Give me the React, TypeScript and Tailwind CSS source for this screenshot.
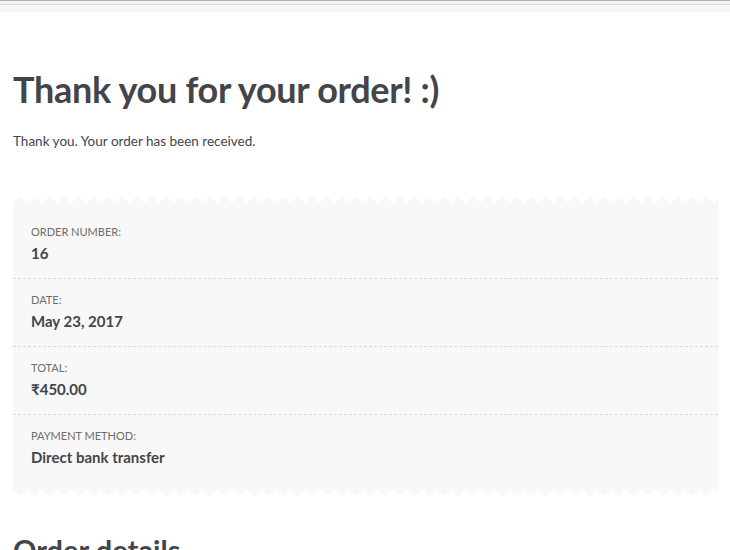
import React from "react";

const rows = [
  { label: "Order number:", value: "16" },
  { label: "Date:", value: "May 23, 2017" },
  { label: "Total:", value: "₹450.00" },
  { label: "Payment method:", value: "Direct bank transfer" },
];

function Zigzag({ flip }: { flip?: boolean }) {
  // saw-tooth edge of the receipt card
  return (
    <svg className="block h-[7px] w-full" preserveAspectRatio="none">
      <defs>
        <pattern id={flip ? "zz-bottom" : "zz-top"} width="14.6" height="7" patternUnits="userSpaceOnUse">
          <path d={flip ? "M0 0 L14.6 0 L7.3 7 Z" : "M0 7 L7.3 0 L14.6 7 Z"} fill="#f8f8f8" />
        </pattern>
      </defs>
      <rect width="100%" height="7" fill={`url(#${flip ? "zz-bottom" : "zz-top"})`} />
    </svg>
  );
}

export default function App() {
  return (
    <div className="h-[550px] w-[730px] overflow-hidden bg-white font-['Lato',sans-serif] text-[#43454b]">
      {/* browser top edge */}
      <div className="h-px bg-[#b3b3b3]" />
      <div className="h-[3px] bg-[#f3f3f3]" />
      <div className="h-px bg-[#d9d9d9]" />
      <div className="h-[7px] bg-[#f6f6f6]" />

      <main className="px-[13px]">
        <h1 className="mt-[54px] text-[36px] leading-[46px] font-bold tracking-[-0.3px]">
          Thank you for your order! :)
        </h1>
        <p className="mt-[19px] text-[13.5px] leading-[20px]">Thank you. Your order has been received.</p>

        <section className="mt-[45px] w-[705px]">
          <Zigzag />
          <ul className="bg-[#f8f8f8] px-[18px] pt-[8px] pb-[7px]">
            {rows.map((row, i) => (
              <li
                key={row.label}
                className={
                  i > 0
                    ? "-mx-[18px] border-t border-dashed border-[#dcdcdc] px-[18px] pt-[14px] pb-[15px]"
                    : "pt-[14px] pb-[15px]"
                }
              >
                <div className="text-[11px] leading-[14px] uppercase text-[#6d6d6d]">{row.label}</div>
                <div className="mt-[4px] text-[15px] leading-[20px] font-bold">{row.value}</div>
              </li>
            ))}
          </ul>
          <Zigzag flip />
        </section>

        <h2 className="mt-[36px] text-[29px] leading-[36px] font-bold">Order details</h2>
      </main>
    </div>
  );
}
